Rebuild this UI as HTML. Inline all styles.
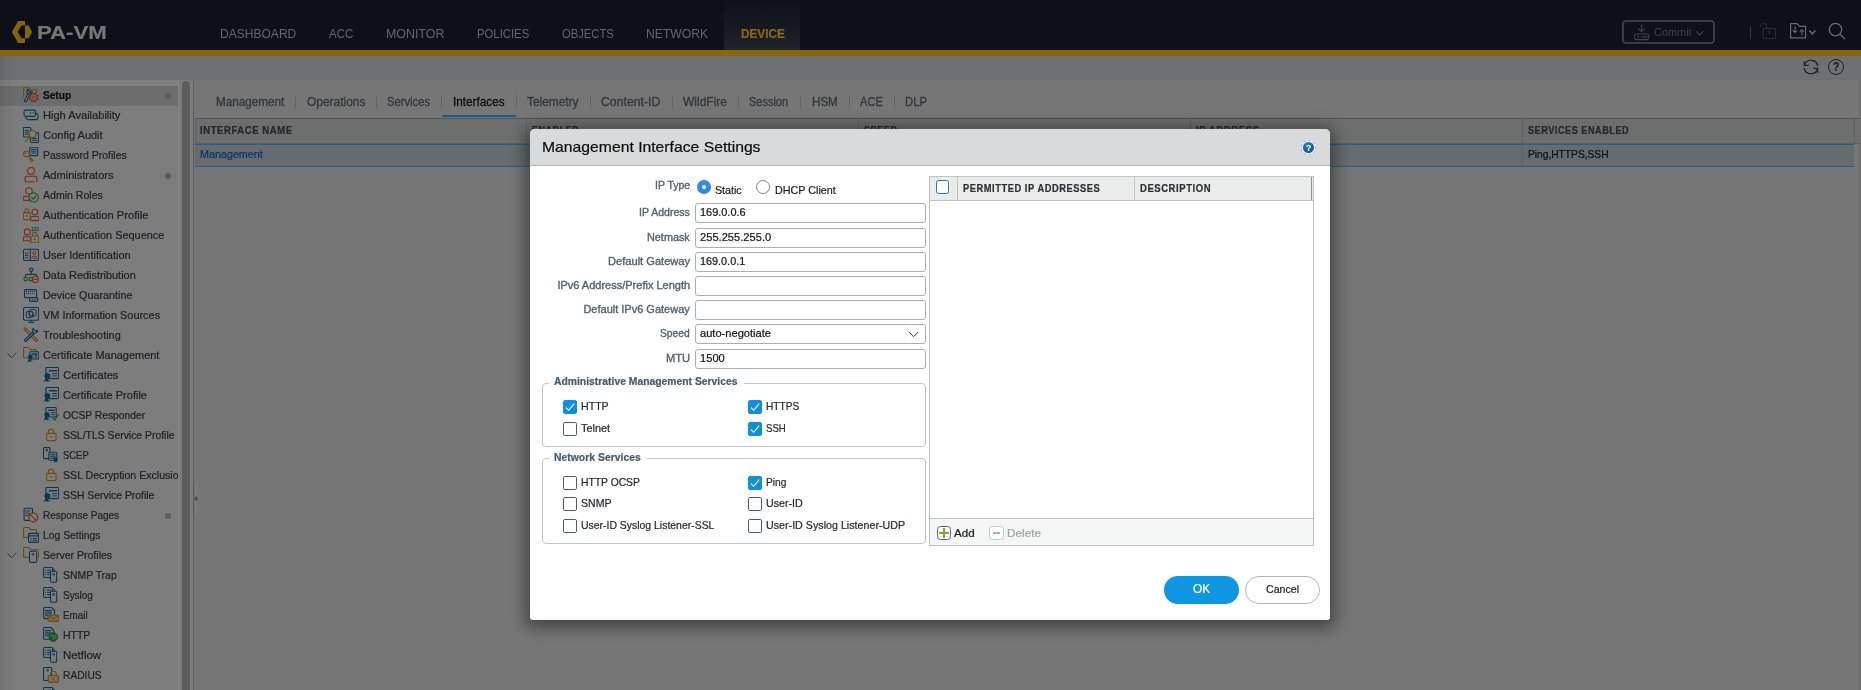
<!DOCTYPE html>
<html lang="en">
<head>
<meta charset="utf-8">
<title>PA-VM</title>
<style>
*{box-sizing:border-box;margin:0;padding:0}
html,body{width:1861px;height:690px;overflow:hidden;background:#7a7a7a;font-family:"Liberation Sans",sans-serif;font-size:12px;color:#1e2024}
.abs{position:absolute}
#top{left:0;top:0;width:1861px;height:50px;background:#0d1016}
#gold{left:0;top:50px;width:1861px;height:6px;background:#88670a}
#strip{left:0;top:56px;width:1861px;height:24px;background:#6f7072}
.logo-t{left:37px;top:20px;font-weight:bold;font-size:19.5px;line-height:24px;color:#9b9b9b;letter-spacing:1.1px;white-space:nowrap}
.nav{top:25px;font-size:13px;line-height:16px;color:#8d9097;white-space:nowrap;letter-spacing:-.1px}
#devtab{left:724px;top:0;width:76px;height:50px;background:linear-gradient(#0e1117 0%,#14171e 45%,#1f232a 100%)}
.nav.act{color:#b8890e;font-weight:bold}
/* sidebar */
#sbtop{left:0;top:80px;width:178px;height:6px;background:#808080}
#side{left:0;top:86px;width:178px;height:604px;background:#7d7d7d;overflow:hidden}
.it{position:absolute;left:0;width:178px;height:20px;line-height:20px;white-space:nowrap;color:#1d1f23}
.it.sel{background:#6c6d6f;font-weight:bold;color:#0c0d0f}
.dot{position:absolute;left:165px;top:7px;width:6px;height:6px;border-radius:3px;background:#5e5e5e}
#sgap{left:178px;top:80px;width:16px;height:610px;background:#7c7c7c;border-left:1px solid #858585}
#sthumb{left:182px;top:81px;width:8px;height:640px;border-radius:4px;background:#5c5c5c}
#vline{left:193.2px;top:80px;width:1.9px;height:610px;background:#5b5c5f}
/* main */
#main{left:194px;top:80px;width:1665px;height:610px;background:#767676}
#rgt{left:1859px;top:80px;width:2px;height:610px;background:#6d6d6d}
.tab{top:94px;font-size:12px;line-height:16px;color:#3b3d41;white-space:nowrap}
.tsep{top:95px;width:1px;height:13px;background:#636466}
#thead{left:195px;top:118px;width:1664px;height:26px;background:#6d6f6f;border-top:1.5px solid #515354;border-bottom:1px solid #5f6162;border-left:1px solid #5c5e5f}
.th{top:125px;font-size:9.5px;font-weight:bold;line-height:12px;letter-spacing:.75px;color:#27292c;white-space:nowrap}
.cs{top:119px;width:1px;height:47px;background:#5f6162}
#trow{left:195px;top:144px;width:1660px;height:23px;background:#656b6e;border-top:1px solid #2b6085;border-bottom:1px solid #2b6085}
/* dialog */
#dlg{left:530px;top:129px;width:800px;height:491px;background:#fff;border-radius:5px 5px 3px 3px;box-shadow:0 3px 16px 5px rgba(0,0,0,.42)}
#dhead{left:0;top:0;width:800px;height:37px;background:#d9dadb;border-bottom:1px solid #b3b6b9;border-radius:5px 5px 0 0}
#dtitle{left:12px;top:7px;font-size:16px;line-height:22px;color:#111;white-space:nowrap;letter-spacing:-.15px}
.lbl{position:absolute;right:640px;font-size:12px;line-height:16px;color:#4e5b66;white-space:nowrap;text-align:right}
.inp{position:absolute;left:165px;width:231px;height:19px;border:1px solid #a9abad;border-radius:2px;background:#fff;font-size:11.5px;line-height:15px;padding:0 0 0 4px;color:#111;white-space:nowrap}
.fs{position:absolute;left:12.2px;width:383.8px;border:1px solid #c3c6c9;border-radius:4px}
.lg{position:absolute;left:7px;top:-9px;background:#fff;padding:0 5px;font-weight:bold;font-size:11.5px;line-height:16px;color:#4a5965;white-space:nowrap;letter-spacing:-.2px}
.cb{position:absolute;width:14px;height:14px;border:1px solid #4f5b66;border-radius:1.8px;background:#fff}
.cb.on{background:#1090dc;border-color:#1090dc;border-radius:2px}
.cb.on svg{position:absolute;left:0;top:0}
.cl{position:absolute;font-size:12px;line-height:16px;color:#222;white-space:nowrap}
.t{position:absolute;white-space:nowrap;line-height:1;transform-origin:0 0;display:block;-webkit-text-stroke:.22px currentColor}
#wrap{position:absolute;left:0;top:0;width:1861px;height:690px;will-change:transform}
#ledge{left:0;top:56px;width:20px;height:634px;background:linear-gradient(to right,rgba(0,0,0,.09),rgba(0,0,0,.045) 30%,rgba(0,0,0,.015) 65%,rgba(0,0,0,0))}
</style>
</head>
<body>
<div id="wrap">
<div id="top" class="abs"></div>
<div id="devtab" class="abs"></div>
<div id="gold" class="abs"></div>
<div id="strip" class="abs"></div>
<svg class="abs" style="left:0px;top:0px;overflow:visible" width="40" height="50" viewBox="0 0 40 50" fill="none" ><path d="M25.03 20.97 H18.1 L11.9 31.97 L18.1 42.96 H25.03 V38.2 H21.5 L17.7 31.97 L21.5 25.6 H25.03 Z" fill="#83650b"/><path d="M25.03 25.6 H28.75 L32.1 31.97 L28.75 38.2 H25.03 Z" fill="#83650b"/></svg>
<span class="t" style="left:220.00px;top:27.10px;font-size:13px;color:#62666e;transform:scaleX(0.9264);-webkit-text-stroke:0;">DASHBOARD</span>
<span class="t" style="left:329.00px;top:27.10px;font-size:13px;color:#62666e;transform:scaleX(0.8851);-webkit-text-stroke:0;">ACC</span>
<span class="t" style="left:385.80px;top:27.10px;font-size:13px;color:#62666e;transform:scaleX(0.9566);-webkit-text-stroke:0;">MONITOR</span>
<span class="t" style="left:476.80px;top:27.10px;font-size:13px;color:#62666e;transform:scaleX(0.8705);-webkit-text-stroke:0;">POLICIES</span>
<span class="t" style="left:561.60px;top:27.10px;font-size:13px;color:#62666e;transform:scaleX(0.8638);-webkit-text-stroke:0;">OBJECTS</span>
<span class="t" style="left:646.30px;top:27.10px;font-size:13px;color:#62666e;transform:scaleX(0.9360);-webkit-text-stroke:0;">NETWORK</span>
<span class="t" style="left:740.50px;top:27.10px;font-size:13px;color:#8c690c;font-weight:bold;transform:scaleX(0.9048);">DEVICE</span>
<span class="t" style="left:36.50px;top:22.82px;font-size:19px;color:#767676;font-weight:bold;transform:scaleX(1.1653);">PA-VM</span>
<div class="abs" style="left:1622px;top:20px;width:93px;height:24px;border:2px solid #373b43;border-radius:4px"></div>
<svg class="abs" style="left:1634px;top:24px;overflow:visible" width="15" height="16" viewBox="0 0 15 16" fill="none" ><path d="M7.6 .2 V7.6 M4.5 4.6 L7.6 7.8 L10.7 4.6" stroke="#3e424a" stroke-width="1.1"/><rect x=".6" y="10" width="14" height="5.6" rx="1.3" stroke="#3e424a" stroke-width="1.1"/><circle cx="4.3" cy="12.8" r=".8" stroke="#3e424a" stroke-width=".8"/><path d="M7.2 12.8 H13.6" stroke="#3e424a" stroke-width="1.1"/></svg>
<span class="t" style="left:1653.70px;top:27.49px;font-size:11px;color:#3e424a;transform:scaleX(0.9923);-webkit-text-stroke:0;">Commit</span>
<svg class="abs" style="left:1696px;top:30.5px;overflow:visible" width="8" height="5" viewBox="0 0 8 5" fill="none" ><path d="M.3 .4 L3.7 4.3 L7.1 .4" stroke="#3e424a" stroke-width="1.1"/></svg>
<div class="abs" style="left:1749.6px;top:26px;width:1.2px;height:12.5px;background:#343840"></div>
<svg class="abs" style="left:1759px;top:22px;overflow:visible" width="18" height="18" viewBox="0 0 18 18" fill="none" ><rect x="4.2" y="6.7" width="12.4" height="9.8" rx=".8" stroke="#252930" stroke-width="1.2"/><path d="M7.8 6.7 V4.6 a3.1 3.1 0 0 0 -6.2 0 V5.4" stroke="#252930" stroke-width="1.2"/><circle cx="10.4" cy="10" r="1.15" fill="#252930"/><path d="M10.4 10.4 V13" stroke="#252930" stroke-width=".9"/></svg>
<svg class="abs" style="left:1789.6px;top:22.5px;overflow:visible" width="16.2" height="15.8" viewBox="0 0 16.2 15.8" fill="none" ><path d="M.6 .6 H7 L9.7 3.4 H15.6 V14.9 H.6 Z" stroke="#686b72" stroke-width="1.2" stroke-linejoin="round"/><path d="M5 3.5 V9.4 M2.9 7.4 L5 9.6 L7.1 7.4" stroke="#686b72" stroke-width="1.05"/><path d="M11.9 12.4 V6.9 M9.8 9 L11.9 6.7 L14 9" stroke="#686b72" stroke-width="1.05"/></svg>
<svg class="abs" style="left:1808.5px;top:29.7px;overflow:visible" width="7" height="5" viewBox="0 0 7 5" fill="none" ><path d="M.4 .6 L3.4 3.8 L6.4 .6" stroke="#686b72" stroke-width="1.5"/></svg>
<svg class="abs" style="left:1828px;top:21.9px;overflow:visible" width="18" height="18" viewBox="0 0 18 18" fill="none" ><circle cx="7.5" cy="7.6" r="6.2" stroke="#686b72" stroke-width="1.3"/><path d="M12 12.2 L16.8 16.8" stroke="#686b72" stroke-width="1.25" stroke-linecap="round"/></svg>
<svg class="abs" style="left:1803px;top:59px;overflow:visible" width="16" height="16" viewBox="0 0 16 16" fill="none" ><path d="M1.3 6.4 A6.9 6.9 0 0 1 14.8 7.2 M1.3 2.2 V6.4 H5.7 M14.6 9.35 A6.9 6.9 0 0 1 1.1 9.2 M10.4 9.35 H14.6 V13.7" stroke="#1c1e21" stroke-width="1.2"/></svg>
<div class="abs" style="left:1828.3px;top:59.3px;width:15.4px;height:15.4px;border:1.2px solid #1c1e21;border-radius:8px"></div>
<span class="t" style="left:1832.80px;top:61.02px;font-size:12.5px;color:#1c1e21;font-weight:bold;transform:scaleX(0.8376);">?</span>

<div id="sbtop" class="abs"></div>
<div id="side" class="abs">
<div class="it sel" style="top:0px"><svg style="position:absolute;left:23px;top:1px" width="16" height="16" viewBox="0 0 16 16" fill="none"><path d="M.6 10 V1 a.7 .7 0 0 1 .7 -.7 H5.3 l1.5 2.3 H13 a.7 .7 0 0 1 .7 .7 V5.3" stroke="#6b4c0d" stroke-width="1.08" fill="none" stroke-linecap="round" stroke-linejoin="round" /><path d="M6.4 5.8 L2.5 13.9" stroke="#0b3651" stroke-width="3.1" fill="none" stroke-linecap="round" stroke-linejoin="round" /><path d="M6.4 5.8 L2.5 13.9" stroke="#6c6d6f" stroke-width="1.1" fill="none" stroke-linecap="round" stroke-linejoin="round" /><path d="M5 2.3 a2.6 2.6 0 1 0 4.1 2.1 l-1.9 .8 -1.2 -1.4 z" stroke="#0b3651" stroke-width="1.1" fill="#6c6d6f" stroke-linecap="round" stroke-linejoin="round" /><circle cx="10.7" cy="10.5" r="3.5" stroke="#7f2b17" stroke-width="1.15" fill="none"/><path d="M14.12 11.92 L15.41 12.45 M12.12 13.92 L12.65 15.21 M9.28 13.92 L8.75 15.21 M7.28 11.92 L5.99 12.45 M7.28 9.08 L5.99 8.55 M9.28 7.08 L8.75 5.79 M12.12 7.08 L12.65 5.79 M14.12 9.08 L15.41 8.55 " stroke="#7f2b17" stroke-width="1.7"/><circle cx="10.7" cy="10.5" r="1.45" stroke="#7f2b17" stroke-width=".95" fill="none"/></svg><i class="dot"></i></div><span class="t" style="left:43.30px;top:4.29px;font-size:11px;color:#0c0d0f;font-weight:bold;transform:scaleX(0.9194);">Setup</span>
<div class="it" style="top:20px"><svg style="position:absolute;left:23px;top:1px" width="16" height="16" viewBox="0 0 16 16" fill="none"><rect x="3.1" y="6.6" width="11.9" height="6" rx="1.6" stroke="#0b3651" stroke-width="1.08" fill="none"/><rect x="1" y="3.1" width="11.6" height="6.3" rx="1.6" stroke="#0b3651" stroke-width="1.08" fill="#7d7d7d"/><rect x="6.8" y="5.2" width="1.5" height="1.5" fill="#145823"/><rect x="9.8" y="5.2" width="1.5" height="1.5" fill="#145823"/></svg></div><span class="t" style="left:43.30px;top:24.29px;font-size:11px;color:#1d1f23;transform:scaleX(1.0072);">High Availability</span>
<div class="it" style="top:40px"><svg style="position:absolute;left:23px;top:1px" width="16" height="16" viewBox="0 0 16 16" fill="none"><rect x="0.4" y="0.4" width="7.4" height="9.6" rx="1.1" stroke="#0b3651" stroke-width="1.08" fill="none"/><path d="M2.2 3.4 H5.4" stroke="#0b3651" stroke-width="1" fill="none" stroke-linecap="round" stroke-linejoin="round" /><path d="M2.2 5.3 H5.4" stroke="#0b3651" stroke-width="1" fill="none" stroke-linecap="round" stroke-linejoin="round" /><path d="M2.2 7.2 H5.4" stroke="#0b3651" stroke-width="1" fill="none" stroke-linecap="round" stroke-linejoin="round" /><rect x="7.4" y="5.6" width="8.2" height="9.9" rx="1.1" stroke="#0b3651" stroke-width="1.08" fill="none"/><path d="M9.2 11.6 H13.8" stroke="#0b3651" stroke-width="1" fill="none" stroke-linecap="round" stroke-linejoin="round" /><path d="M9.2 13.4 H13.8" stroke="#0b3651" stroke-width="1" fill="none" stroke-linecap="round" stroke-linejoin="round" /><circle cx="9.5" cy="7.1" r="3.6" stroke="#6b4c0d" stroke-width="1.2" fill="#7d7d7d"/><path d="M7 9.9 L2.3 14.6" stroke="#6b4c0d" stroke-width="1.2" fill="none" stroke-linecap="round" stroke-linejoin="round" /></svg></div><span class="t" style="left:43.30px;top:44.29px;font-size:11px;color:#1d1f23;">Config Audit</span>
<div class="it" style="top:60px"><svg style="position:absolute;left:23px;top:1px" width="16" height="16" viewBox="0 0 16 16" fill="none"><rect x="6.7" y="0.3" width="8" height="8.3" rx="1.1" stroke="#0b3651" stroke-width="1.08" fill="none"/><path d="M8.5 2.4 H12.9" stroke="#0b3651" stroke-width="1" fill="none" stroke-linecap="round" stroke-linejoin="round" /><path d="M8.5 4.2 H12.9" stroke="#0b3651" stroke-width="1" fill="none" stroke-linecap="round" stroke-linejoin="round" /><path d="M8.5 6.1 H12.9" stroke="#0b3651" stroke-width="1" fill="none" stroke-linecap="round" stroke-linejoin="round" /><circle cx="3.4" cy="6.9" r="2.9" stroke="#6b4c0d" stroke-width="1.2" fill="#7d7d7d"/><circle cx="2.7" cy="6.2" r="0.6" stroke="#6b4c0d" stroke-width=".8" fill="none"/><path d="M5.5 9 L10 13.4 L8.9 14.6 L7.6 13.3 M7.8 11.3 l-1.2 1.2" stroke="#6b4c0d" stroke-width="1.2" fill="none" stroke-linecap="round" stroke-linejoin="round" /></svg></div><span class="t" style="left:43.30px;top:64.29px;font-size:11px;color:#1d1f23;transform:scaleX(0.9506);">Password Profiles</span>
<div class="it" style="top:80px"><svg style="position:absolute;left:23px;top:1px" width="16" height="16" viewBox="0 0 16 16" fill="none"><circle cx="8" cy="3.9" r="3.5" stroke="#7f2b17" stroke-width="1.08" fill="none"/><path d="M13.8 14.7 V10.5 a1.3 1.3 0 0 0 -1.3 -1.3 H3.5 a1.3 1.3 0 0 0 -1.3 1.3 V14.7 H11.2" stroke="#7f2b17" stroke-width="1.08" fill="none" stroke-linecap="round" stroke-linejoin="round" /></svg><i class="dot"></i></div><span class="t" style="left:43.30px;top:84.29px;font-size:11px;color:#1d1f23;transform:scaleX(1.0029);">Administrators</span>
<div class="it" style="top:100px"><svg style="position:absolute;left:23px;top:1px" width="16" height="16" viewBox="0 0 16 16" fill="none"><circle cx="6" cy="3.9" r="3.2" stroke="#7f2b17" stroke-width="1.08" fill="none"/><path d="M8.5 13.4 V10.7 a1.3 1.3 0 0 0 -1.3 -1.3 H1.7 a1.3 1.3 0 0 0 -1.3 1.3 V13.4 H8.5" stroke="#7f2b17" stroke-width="1.08" fill="none" stroke-linecap="round" stroke-linejoin="round" /><circle cx="10.7" cy="10.4" r="4.6" stroke="#145823" stroke-width="1.2" fill="#7d7d7d"/><path d="M8.6 10.5 L10.2 12.2 L13 8.8" stroke="#145823" stroke-width="1.2" fill="none" stroke-linecap="round" stroke-linejoin="round" /></svg></div><span class="t" style="left:43.30px;top:104.29px;font-size:11px;color:#1d1f23;transform:scaleX(0.9590);">Admin Roles</span>
<div class="it" style="top:120px"><svg style="position:absolute;left:23px;top:1px" width="16" height="16" viewBox="0 0 16 16" fill="none"><path d="M2 5.6 V3.55 a1.85 1.85 0 0 1 3.7 0 V5.6" stroke="#6b4c0d" stroke-width="1.08" fill="none" stroke-linecap="round" stroke-linejoin="round" /><rect x="0.4" y="5.6" width="6.8" height="7" rx="1.1" stroke="#6b4c0d" stroke-width="1.08" fill="none"/><rect x="3.05" y="8.1" width="1.5" height="1.7" fill="#6b4c0d"/><circle cx="11.8" cy="5.1" r="2.9" stroke="#7f2b17" stroke-width="1.08" fill="none"/><path d="M15.8 13.6 V10.8 a1.3 1.3 0 0 0 -1.3 -1.3 H9.1 a1.3 1.3 0 0 0 -1.3 1.3 V13.6 H15.8" stroke="#7f2b17" stroke-width="1.08" fill="none" stroke-linecap="round" stroke-linejoin="round" /></svg></div><span class="t" style="left:43.30px;top:124.29px;font-size:11px;color:#1d1f23;transform:scaleX(1.0149);">Authentication Profile</span>
<div class="it" style="top:140px"><svg style="position:absolute;left:23px;top:1px" width="16" height="16" viewBox="0 0 16 16" fill="none"><circle cx="4.3" cy="4.9" r="3" stroke="#7f2b17" stroke-width="1.08" fill="none"/><path d="M7.4 13.8 V11 a1.3 1.3 0 0 0 -1.3 -1.3 H1.7 a1.3 1.3 0 0 0 -1.3 1.3 V13.8 H7.4" stroke="#7f2b17" stroke-width="1.08" fill="none" stroke-linecap="round" stroke-linejoin="round" /><text x="8" y="3.6" font-family="Liberation Sans,sans-serif" font-size="4.6" font-weight="bold" fill="#0b3651" textLength="7.8" lengthAdjust="spacingAndGlyphs">123</text><path d="M9.6 9 V7.55 a2.15 2.15 0 0 1 4.3 0 V9" stroke="#6b4c0d" stroke-width="1.08" fill="none" stroke-linecap="round" stroke-linejoin="round" /><rect x="7.9" y="9" width="7.8" height="6.8" rx="1.1" stroke="#6b4c0d" stroke-width="1.08" fill="#7d7d7d"/><rect x="11.05" y="11.4" width="1.5" height="1.7" fill="#6b4c0d"/></svg></div><span class="t" style="left:43.30px;top:144.29px;font-size:11px;color:#1d1f23;transform:scaleX(0.9916);">Authentication Sequence</span>
<div class="it" style="top:160px"><svg style="position:absolute;left:23px;top:1px" width="16" height="16" viewBox="0 0 16 16" fill="none"><rect x="0.5" y="2.2" width="15.1" height="11.3" rx="1.5" stroke="#0b3651" stroke-width="1.08" fill="none"/><path d="M7.3 2.2 V13.5" stroke="#0b3651" stroke-width="1.08" fill="none" stroke-linecap="round" stroke-linejoin="round" /><path d="M2.3 6.1 H5 M2.3 8.4 H5 M2.3 10.7 H5" stroke="#0b3651" stroke-width="1" fill="none" stroke-linecap="round" stroke-linejoin="round" /><circle cx="11.3" cy="5.9" r="1.5" stroke="#7f2b17" stroke-width="1" fill="none"/><path d="M9 11.4 V10.6 a1.4 1.4 0 0 1 1.4 -1.4 H12.3 a1.4 1.4 0 0 1 1.4 1.4 V11.4 H10.5" stroke="#7f2b17" stroke-width="1" fill="none" stroke-linecap="round" stroke-linejoin="round" /></svg></div><span class="t" style="left:43.30px;top:164.29px;font-size:11px;color:#1d1f23;transform:scaleX(0.9949);">User Identification</span>
<div class="it" style="top:180px"><svg style="position:absolute;left:23px;top:1px" width="16" height="16" viewBox="0 0 16 16" fill="none"><rect x="6.8" y="1.2" width="3" height="3" rx="0.6" stroke="#0b3651" stroke-width="1.1" fill="none"/><path d="M8.3 4.3 V7.4 M2.6 9.6 V8.6 a1.2 1.2 0 0 1 1.2 -1.2 H12.6 a1.2 1.2 0 0 1 1.2 1.2 V9" stroke="#0b3651" stroke-width="1.1" fill="none" stroke-linecap="round" stroke-linejoin="round" /><rect x="1.1" y="10.5" width="3.1" height="3.1" rx="0.5" stroke="#145823" stroke-width="1.1" fill="none"/><rect x="6.2" y="10.5" width="3.1" height="3.1" rx="0.5" stroke="#145823" stroke-width="1.1" fill="none"/><circle cx="12.5" cy="12.4" r="3.1" stroke="#7f2b17" stroke-width="1.1" fill="#7d7d7d"/><path d="M11 12.4 H14" stroke="#7f2b17" stroke-width="1.2" fill="none" stroke-linecap="round" stroke-linejoin="round" /></svg></div><span class="t" style="left:43.30px;top:184.29px;font-size:11px;color:#1d1f23;transform:scaleX(0.9908);">Data Redistribution</span>
<div class="it" style="top:200px"><svg style="position:absolute;left:23px;top:1px" width="16" height="16" viewBox="0 0 16 16" fill="none"><rect x="1.5" y="2.6" width="12.1" height="8" rx="1" stroke="#0b3651" stroke-width="1.08" fill="none"/><path d="M3.4 4.6 H12" stroke="#0b3651" stroke-width="1.1" fill="none" stroke-linecap="round" stroke-linejoin="round" stroke-dasharray=".2 1.7"/><path d="M3.4 6.8 H12" stroke="#0b3651" stroke-width="1.1" fill="none" stroke-linecap="round" stroke-linejoin="round" stroke-dasharray=".2 1.7"/><rect x="6.5" y="10.6" width="8.3" height="3.8" rx="1.1" stroke="#0b3651" stroke-width="1.08" fill="#7d7d7d"/><path d="M9.3 12.5 h.1 M12 12.5 h.1" stroke="#0b3651" stroke-width="1.3" fill="none" stroke-linecap="round" stroke-linejoin="round" /></svg></div><span class="t" style="left:43.30px;top:204.29px;font-size:11px;color:#1d1f23;transform:scaleX(0.9823);">Device Quarantine</span>
<div class="it" style="top:220px"><svg style="position:absolute;left:23px;top:1px" width="16" height="16" viewBox="0 0 16 16" fill="none"><rect x="0.5" y="0.5" width="15.1" height="12.7" rx="1.6" stroke="#0b3651" stroke-width="1.08" fill="none"/><path d="M8 13.2 V15.3 M5.6 15.4 H10.6" stroke="#0b3651" stroke-width="1.08" fill="none" stroke-linecap="round" stroke-linejoin="round" /><rect x="3.3" y="4.4" width="6.6" height="6.2" rx="1.6" stroke="#0b3651" stroke-width="1" fill="none"/><rect x="6" y="2.6" width="7.2" height="6.4" rx="1.6" stroke="#0b3651" stroke-width="1" fill="none"/><circle cx="8.3" cy="6.9" r="2.2" stroke="#0b3651" stroke-width=".9" fill="none"/></svg></div><span class="t" style="left:43.30px;top:224.29px;font-size:11px;color:#1d1f23;transform:scaleX(0.9924);">VM Information Sources</span>
<div class="it" style="top:240px"><svg style="position:absolute;left:23px;top:1px" width="16" height="16" viewBox="0 0 16 16" fill="none"><path d="M2 1.8 L13.4 13.4" stroke="#6b4c0d" stroke-width="3.1" fill="none" stroke-linecap="round" stroke-linejoin="round" /><path d="M2.3 2.1 L13.1 13.1" stroke="#7d7d7d" stroke-width="1" fill="none" stroke-linecap="round" stroke-linejoin="round" /><path d="M11.6 4.6 L2.6 13.3" stroke="#0b3651" stroke-width="3.1" fill="none" stroke-linecap="round" stroke-linejoin="round" /><path d="M11.6 4.6 L2.6 13.3" stroke="#7d7d7d" stroke-width="1" fill="none" stroke-linecap="round" stroke-linejoin="round" /><path d="M10.2 1.4 a2.7 2.7 0 1 0 4.4 1.8 l-2 1 -1.5 -1.4 z" stroke="#0b3651" stroke-width="1.1" fill="#7d7d7d" stroke-linecap="round" stroke-linejoin="round" /></svg></div><span class="t" style="left:43.30px;top:244.29px;font-size:11px;color:#1d1f23;transform:scaleX(0.9900);">Troubleshooting</span>
<div class="it" style="top:260px"><svg style="position:absolute;left:7px;top:6px" width="10" height="8" viewBox="0 0 10 8" fill="none"><path d="M.2 .9 L4.6 5.8 L9 .9" stroke="#37393c" stroke-width="1"/></svg><svg style="position:absolute;left:23px;top:1px" width="16" height="16" viewBox="0 0 16 16" fill="none"><path d="M0.6 10.8 V1.2 a.8 .8 0 0 1 .8 -.8 H5.8 l1.6 2.2 H12.6 a.8 .8 0 0 1 .8 .8 V10.8 Z" stroke="#6b4c0d" stroke-width="1.08" fill="none" stroke-linecap="round" stroke-linejoin="round" /><rect x="6.8" y="4.8" width="9" height="7.2" fill="#7d7d7d"/><rect x="6.8" y="4.8" width="9" height="7.2" rx="1.2" stroke="#0b3651" stroke-width="1.08" fill="none"/><path d="M9.32 6.96 H13.8" stroke="#0b3651" stroke-width="1.5" fill="none" stroke-linecap="round" stroke-linejoin="round" /><path d="M11.75 8.76 H13.8 M11.75 10.272 H13.8" stroke="#0b3651" stroke-width="1" fill="none" stroke-linecap="round" stroke-linejoin="round" /><path d="M6.08 11.1 L4.43 15.4 L6.19 14.3 L7.4 15.1 L8.61 14.3 L10.37 15.4 Z" fill="#0b3651"/><circle cx="7.4" cy="10" r="2.2" fill="#0b3651" stroke="#0b3651" stroke-width=".8" stroke-dasharray="1 .7"/></svg></div><span class="t" style="left:43.30px;top:264.29px;font-size:11px;color:#1d1f23;transform:scaleX(0.9967);">Certificate Management</span>
<div class="it" style="top:280px"><svg style="position:absolute;left:43px;top:1px" width="16" height="16" viewBox="0 0 16 16" fill="none"><rect x="2.9" y="0.4" width="12.7" height="11.2" rx="1.2" stroke="#0b3651" stroke-width="1.08" fill="none"/><path d="M6.456 3.76 H13.6" stroke="#0b3651" stroke-width="1.5" fill="none" stroke-linecap="round" stroke-linejoin="round" /><path d="M9.885 6.56 H13.6 M9.885 8.912 H13.6" stroke="#0b3651" stroke-width="1" fill="none" stroke-linecap="round" stroke-linejoin="round" /><path d="M2.78 10.25 L0.755 15.2 L2.915 14.1 L4.4 14.9 L5.885 14.1 L8.045 15.2 Z" fill="#0b3651"/><circle cx="4.4" cy="8.9" r="2.7" fill="#0b3651" stroke="#0b3651" stroke-width=".8" stroke-dasharray="1 .7"/></svg></div><span class="t" style="left:63.30px;top:284.29px;font-size:11px;color:#1d1f23;">Certificates</span>
<div class="it" style="top:300px"><svg style="position:absolute;left:43px;top:1px" width="16" height="16" viewBox="0 0 16 16" fill="none"><rect x="2.9" y="0.4" width="12.7" height="11.2" rx="1.2" stroke="#0b3651" stroke-width="1.08" fill="none"/><path d="M6.456 3.76 H13.6" stroke="#0b3651" stroke-width="1.5" fill="none" stroke-linecap="round" stroke-linejoin="round" /><path d="M9.885 6.56 H13.6 M9.885 8.912 H13.6" stroke="#0b3651" stroke-width="1" fill="none" stroke-linecap="round" stroke-linejoin="round" /><path d="M2.78 10.25 L0.755 15.2 L2.915 14.1 L4.4 14.9 L5.885 14.1 L8.045 15.2 Z" fill="#0b3651"/><circle cx="4.4" cy="8.9" r="2.7" fill="#0b3651" stroke="#0b3651" stroke-width=".8" stroke-dasharray="1 .7"/></svg></div><span class="t" style="left:63.30px;top:304.29px;font-size:11px;color:#1d1f23;transform:scaleX(1.0028);">Certificate Profile</span>
<div class="it" style="top:320px"><svg style="position:absolute;left:43px;top:1px" width="16" height="16" viewBox="0 0 16 16" fill="none"><rect x="2.9" y="0.4" width="10.3" height="9.6" rx="1.2" stroke="#0b3651" stroke-width="1.08" fill="none"/><path d="M5.784 3.28 H11.2" stroke="#0b3651" stroke-width="1.5" fill="none" stroke-linecap="round" stroke-linejoin="round" /><path d="M8.565 5.68 H11.2 M8.565 7.696 H11.2" stroke="#0b3651" stroke-width="1" fill="none" stroke-linecap="round" stroke-linejoin="round" /><path d="M2.6 9.05 L0.725 13.6 L2.725 12.5 L4.1 13.3 L5.475 12.5 L7.475 13.6 Z" fill="#0b3651"/><circle cx="4.1" cy="7.8" r="2.5" fill="#0b3651" stroke="#0b3651" stroke-width=".8" stroke-dasharray="1 .7"/><path d="M9.8 10.8 L11.8 13 L15.4 7.6" stroke="#145823" stroke-width="1.2" fill="none" stroke-linecap="round" stroke-linejoin="round" /></svg></div><span class="t" style="left:63.30px;top:324.29px;font-size:11px;color:#1d1f23;transform:scaleX(0.9344);">OCSP Responder</span>
<div class="it" style="top:340px"><svg style="position:absolute;left:43px;top:1px" width="16" height="16" viewBox="0 0 16 16" fill="none"><path d="M5.4 6.4 V5.05 a2.75 2.75 0 0 1 5.5 0 V6.4" stroke="#6b4c0d" stroke-width="1.08" fill="none" stroke-linecap="round" stroke-linejoin="round" /><rect x="3.6" y="6.4" width="9.4" height="7.2" rx="1.1" stroke="#6b4c0d" stroke-width="1.08" fill="none"/><rect x="7.55" y="9" width="1.5" height="1.7" fill="#6b4c0d"/></svg></div><span class="t" style="left:63.30px;top:344.29px;font-size:11px;color:#1d1f23;transform:scaleX(0.9449);">SSL/TLS Service Profile</span>
<div class="it" style="top:360px"><svg style="position:absolute;left:43px;top:1px" width="16" height="16" viewBox="0 0 16 16" fill="none"><rect x="0.5" y="0.4" width="6.4" height="11.2" rx="1.2" stroke="#0b3651" stroke-width="1.08" fill="none"/><circle cx="3.7" cy="3" r="0.9" stroke="#0b3651" stroke-width="1" fill="none"/><rect x="5.8" y="5.2" width="8" height="8" fill="#7d7d7d"/><rect x="5.8" y="5.2" width="8" height="8" rx="1.1" stroke="#0b3651" stroke-width="1.08" fill="none"/><path d="M7.6 7.3 H12" stroke="#0b3651" stroke-width="1" fill="none" stroke-linecap="round" stroke-linejoin="round" /><path d="M7.6 9.2 H12" stroke="#0b3651" stroke-width="1" fill="none" stroke-linecap="round" stroke-linejoin="round" /><path d="M7.6 11.1 H12" stroke="#0b3651" stroke-width="1" fill="none" stroke-linecap="round" stroke-linejoin="round" /><path d="M10.6 15.8 L11.6 12.8 L13.6 12.8 L15 15.8 L12.8 14.6 Z" fill="#0b3651"/><circle cx="12.7" cy="12.3" r="1.9" stroke="#0b3651" stroke-width=".7" fill="#0b3651"/></svg></div><span class="t" style="left:63.30px;top:364.29px;font-size:11px;color:#1d1f23;transform:scaleX(0.8576);">SCEP</span>
<div class="it" style="top:380px"><svg style="position:absolute;left:43px;top:1px" width="16" height="16" viewBox="0 0 16 16" fill="none"><path d="M5.4 6.4 V5.05 a2.75 2.75 0 0 1 5.5 0 V6.4" stroke="#6b4c0d" stroke-width="1.08" fill="none" stroke-linecap="round" stroke-linejoin="round" /><rect x="3.6" y="6.4" width="9.4" height="7.2" rx="1.1" stroke="#6b4c0d" stroke-width="1.08" fill="none"/><rect x="7.55" y="9" width="1.5" height="1.7" fill="#6b4c0d"/></svg></div><span class="t" style="left:63.30px;top:384.29px;font-size:11px;color:#1d1f23;transform:scaleX(0.9631);">SSL Decryption Exclusion</span>
<div class="it" style="top:400px"><svg style="position:absolute;left:43px;top:1px" width="16" height="16" viewBox="0 0 16 16" fill="none"><rect x="2.9" y="0.4" width="12.7" height="11.2" rx="1.2" stroke="#0b3651" stroke-width="1.08" fill="none"/><path d="M6.456 3.76 H13.6" stroke="#0b3651" stroke-width="1.5" fill="none" stroke-linecap="round" stroke-linejoin="round" /><path d="M9.885 6.56 H13.6 M9.885 8.912 H13.6" stroke="#0b3651" stroke-width="1" fill="none" stroke-linecap="round" stroke-linejoin="round" /><path d="M2.78 10.25 L0.755 15.2 L2.915 14.1 L4.4 14.9 L5.885 14.1 L8.045 15.2 Z" fill="#0b3651"/><circle cx="4.4" cy="8.9" r="2.7" fill="#0b3651" stroke="#0b3651" stroke-width=".8" stroke-dasharray="1 .7"/></svg></div><span class="t" style="left:63.30px;top:404.29px;font-size:11px;color:#1d1f23;transform:scaleX(0.9462);">SSH Service Profile</span>
<div class="it" style="top:420px"><svg style="position:absolute;left:23px;top:1px" width="16" height="16" viewBox="0 0 16 16" fill="none"><rect x="1.1" y="1.2" width="8.4" height="12.2" rx="1.1" stroke="#0b3651" stroke-width="1.08" fill="none"/><path d="M2.9 3.9 H6.8" stroke="#0b3651" stroke-width="1" fill="none" stroke-linecap="round" stroke-linejoin="round" /><path d="M2.9 6.2 H6.8" stroke="#0b3651" stroke-width="1" fill="none" stroke-linecap="round" stroke-linejoin="round" /><path d="M2.9 8.5 H6.8" stroke="#0b3651" stroke-width="1" fill="none" stroke-linecap="round" stroke-linejoin="round" /><circle cx="10.2" cy="10.4" r="4.4" stroke="#7f2b17" stroke-width="1.2" fill="#7d7d7d"/><path d="M7.2 7.4 L13.2 13.4" stroke="#7f2b17" stroke-width="1.2" fill="none" stroke-linecap="round" stroke-linejoin="round" /></svg><i class="dot"></i></div><span class="t" style="left:43.30px;top:424.29px;font-size:11px;color:#1d1f23;transform:scaleX(0.9083);">Response Pages</span>
<div class="it" style="top:440px"><svg style="position:absolute;left:23px;top:1px" width="16" height="16" viewBox="0 0 16 16" fill="none"><path d="M0.6 10.4 V1.2 a.8 .8 0 0 1 .8 -.8 H5.8 l1.6 2.2 H12.6 a.8 .8 0 0 1 .8 .8 V10.4 Z" stroke="#6b4c0d" stroke-width="1.08" fill="none" stroke-linecap="round" stroke-linejoin="round" /><rect x="5.5" y="6.4" width="10.2" height="9" rx="1.3" stroke="#0b3651" stroke-width="1.08" fill="#7d7d7d"/><path d="M5.5 8.9 H15.7" stroke="#0b3651" stroke-width="1.08" fill="none" stroke-linecap="round" stroke-linejoin="round" /><path d="M7.6 11.4 h.6 M10 11.4 H13.6 M7.6 13.3 h.6 M10 13.3 H13.6" stroke="#0b3651" stroke-width="1" fill="none" stroke-linecap="round" stroke-linejoin="round" /></svg></div><span class="t" style="left:43.30px;top:444.29px;font-size:11px;color:#1d1f23;transform:scaleX(0.9402);">Log Settings</span>
<div class="it" style="top:460px"><svg style="position:absolute;left:7px;top:6px" width="10" height="8" viewBox="0 0 10 8" fill="none"><path d="M.2 .9 L4.6 5.8 L9 .9" stroke="#37393c" stroke-width="1"/></svg><svg style="position:absolute;left:23px;top:1px" width="16" height="16" viewBox="0 0 16 16" fill="none"><path d="M0.6 10.2 V1.3 a.8 .8 0 0 1 .8 -.8 H5.8 l1.6 2.2 H14.8 a.8 .8 0 0 1 .8 .8 V10.2 Z" stroke="#6b4c0d" stroke-width="1.08" fill="none" stroke-linecap="round" stroke-linejoin="round" /><rect x="6.5" y="4.2" width="7.2" height="11.2" rx="1.2" stroke="#0b3651" stroke-width="1.08" fill="#7d7d7d"/><circle cx="10.1" cy="7.3" r="0.9" stroke="#0b3651" stroke-width="1" fill="none"/></svg></div><span class="t" style="left:43.30px;top:464.29px;font-size:11px;color:#1d1f23;transform:scaleX(0.9579);">Server Profiles</span>
<div class="it" style="top:480px"><svg style="position:absolute;left:43px;top:1px" width="16" height="16" viewBox="0 0 16 16" fill="none"><rect x="0.6" y="0.5" width="9.1" height="10" rx="1.1" stroke="#0b3651" stroke-width="1.08" fill="none"/><path d="M2.4 3.1 h.1 M4.3 3.1 H7.6" stroke="#0b3651" stroke-width="1" fill="none" stroke-linecap="round" stroke-linejoin="round" /><path d="M2.4 5.4 h.1 M4.3 5.4 H7.6" stroke="#0b3651" stroke-width="1" fill="none" stroke-linecap="round" stroke-linejoin="round" /><path d="M2.4 7.7 h.1 M4.3 7.7 H7.6" stroke="#0b3651" stroke-width="1" fill="none" stroke-linecap="round" stroke-linejoin="round" /><path d="M9.5 4.3 V3.3 a1.1 1.1 0 0 1 2.2 0 V4.3" stroke="#0b3651" stroke-width="1" fill="none" stroke-linecap="round" stroke-linejoin="round" /><rect x="7.5" y="4.3" width="6.2" height="10.9" rx="1.2" stroke="#0b3651" stroke-width="1.08" fill="#7d7d7d"/><circle cx="10.6" cy="7.4" r="0.9" stroke="#0b3651" stroke-width="1" fill="none"/></svg></div><span class="t" style="left:63.30px;top:484.29px;font-size:11px;color:#1d1f23;transform:scaleX(0.9478);">SNMP Trap</span>
<div class="it" style="top:500px"><svg style="position:absolute;left:43px;top:1px" width="16" height="16" viewBox="0 0 16 16" fill="none"><rect x="0.6" y="0.5" width="9.1" height="10" rx="1.1" stroke="#0b3651" stroke-width="1.08" fill="none"/><path d="M2.4 3.1 h.1 M4.3 3.1 H7.6" stroke="#0b3651" stroke-width="1" fill="none" stroke-linecap="round" stroke-linejoin="round" /><path d="M2.4 5.4 h.1 M4.3 5.4 H7.6" stroke="#0b3651" stroke-width="1" fill="none" stroke-linecap="round" stroke-linejoin="round" /><path d="M2.4 7.7 h.1 M4.3 7.7 H7.6" stroke="#0b3651" stroke-width="1" fill="none" stroke-linecap="round" stroke-linejoin="round" /><path d="M9.5 4.3 V3.3 a1.1 1.1 0 0 1 2.2 0 V4.3" stroke="#0b3651" stroke-width="1" fill="none" stroke-linecap="round" stroke-linejoin="round" /><rect x="7.5" y="4.3" width="6.2" height="10.9" rx="1.2" stroke="#0b3651" stroke-width="1.08" fill="#7d7d7d"/><circle cx="10.6" cy="7.4" r="0.9" stroke="#0b3651" stroke-width="1" fill="none"/></svg></div><span class="t" style="left:63.30px;top:504.29px;font-size:11px;color:#1d1f23;transform:scaleX(0.9052);">Syslog</span>
<div class="it" style="top:520px"><svg style="position:absolute;left:43px;top:1px" width="16" height="16" viewBox="0 0 16 16" fill="none"><path d="M1.6 0.5 H8.6 L11.6 3.5 V10.6 a1 1 0 0 1 -1 1 H1.6 a1 1 0 0 1 -1 -1 V1.5 a1 1 0 0 1 1 -1 Z" stroke="#0b3651" stroke-width="1.08" fill="none" stroke-linecap="round" stroke-linejoin="round" /><path d="M2.4 3.4 H8.6" stroke="#0b3651" stroke-width="1" fill="none" stroke-linecap="round" stroke-linejoin="round" /><path d="M2.4 5.2 H8.6" stroke="#0b3651" stroke-width="1" fill="none" stroke-linecap="round" stroke-linejoin="round" /><path d="M2.4 7 H8.6" stroke="#0b3651" stroke-width="1" fill="none" stroke-linecap="round" stroke-linejoin="round" /><path d="M2.4 8.8 H8.6" stroke="#0b3651" stroke-width="1" fill="none" stroke-linecap="round" stroke-linejoin="round" /><rect x="5.2" y="8.3" width="10.5" height="6.1" rx="0.9" stroke="#6b4c0d" stroke-width="1.1" fill="#7a6c4e"/><path d="M5.6 8.9 L10.4 12.2 L15.3 8.9" stroke="#6b4c0d" stroke-width="1.1" fill="none" stroke-linecap="round" stroke-linejoin="round" /></svg></div><span class="t" style="left:63.30px;top:524.29px;font-size:11px;color:#1d1f23;transform:scaleX(0.8977);">Email</span>
<div class="it" style="top:540px"><svg style="position:absolute;left:43px;top:1px" width="16" height="16" viewBox="0 0 16 16" fill="none"><path d="M1.6 0.5 H7.8 L10.8 3.5 V11.2 a1 1 0 0 1 -1 1 H1.6 a1 1 0 0 1 -1 -1 V1.5 a1 1 0 0 1 1 -1 Z" stroke="#0b3651" stroke-width="1.08" fill="none" stroke-linecap="round" stroke-linejoin="round" /><path d="M2.4 3.4 H7.8" stroke="#0b3651" stroke-width="1" fill="none" stroke-linecap="round" stroke-linejoin="round" /><path d="M2.4 5.2 H7.8" stroke="#0b3651" stroke-width="1" fill="none" stroke-linecap="round" stroke-linejoin="round" /><path d="M2.4 7 H7.8" stroke="#0b3651" stroke-width="1" fill="none" stroke-linecap="round" stroke-linejoin="round" /><path d="M2.4 8.8 H7.8" stroke="#0b3651" stroke-width="1" fill="none" stroke-linecap="round" stroke-linejoin="round" /><circle cx="10.3" cy="10" r="4.4" stroke="#145823" stroke-width="1" fill="#145823"/><path d="M8 8.6 q1.2 -.9 2.4 0 q.8 1 -.4 1.8 l.5 1.8 M12.4 8 l.8 1.4 -.9 1.6" stroke="#7d7d7d" stroke-width=".8" fill="none" stroke-linecap="round" stroke-linejoin="round" /></svg></div><span class="t" style="left:63.30px;top:544.29px;font-size:11px;color:#1d1f23;transform:scaleX(0.9501);">HTTP</span>
<div class="it" style="top:560px"><svg style="position:absolute;left:43px;top:1px" width="16" height="16" viewBox="0 0 16 16" fill="none"><rect x="0.6" y="0.5" width="9.1" height="10" rx="1.1" stroke="#0b3651" stroke-width="1.08" fill="none"/><path d="M2.4 3.1 h.1 M4.3 3.1 H7.6" stroke="#0b3651" stroke-width="1" fill="none" stroke-linecap="round" stroke-linejoin="round" /><path d="M2.4 5.4 h.1 M4.3 5.4 H7.6" stroke="#0b3651" stroke-width="1" fill="none" stroke-linecap="round" stroke-linejoin="round" /><path d="M2.4 7.7 h.1 M4.3 7.7 H7.6" stroke="#0b3651" stroke-width="1" fill="none" stroke-linecap="round" stroke-linejoin="round" /><path d="M9.5 4.3 V3.3 a1.1 1.1 0 0 1 2.2 0 V4.3" stroke="#0b3651" stroke-width="1" fill="none" stroke-linecap="round" stroke-linejoin="round" /><rect x="7.5" y="4.3" width="6.2" height="10.9" rx="1.2" stroke="#0b3651" stroke-width="1.08" fill="#7d7d7d"/><circle cx="10.6" cy="7.4" r="0.9" stroke="#0b3651" stroke-width="1" fill="none"/></svg></div><span class="t" style="left:63.30px;top:564.29px;font-size:11px;color:#1d1f23;transform:scaleX(1.0358);">Netflow</span>
<div class="it" style="top:580px"><svg style="position:absolute;left:43px;top:1px" width="16" height="16" viewBox="0 0 16 16" fill="none"><rect x="0.5" y="0.4" width="8.2" height="13.1" rx="1.2" stroke="#0b3651" stroke-width="1.08" fill="none"/><circle cx="4.6" cy="3.2" r="0.9" stroke="#0b3651" stroke-width="1" fill="none"/><path d="M7.6 8.5 V7 a2.8 2.8 0 0 1 5.6 0 V8.5" stroke="#6b4c0d" stroke-width="1.08" fill="none" stroke-linecap="round" stroke-linejoin="round" /><rect x="5.2" y="8.5" width="10.4" height="6.9" rx="1.1" stroke="#6b4c0d" stroke-width="1.08" fill="#7a6c4e"/><rect x="9.65" y="10.95" width="1.5" height="1.7" fill="#6b4c0d"/></svg></div><span class="t" style="left:63.30px;top:584.29px;font-size:11px;color:#1d1f23;transform:scaleX(0.9287);">RADIUS</span>
<div class="it" style="top:600px"><svg style="position:absolute;left:43px;top:1px" width="16" height="16" viewBox="0 0 16 16" fill="none"><rect x="0.6" y="0.5" width="9.1" height="10" rx="1.1" stroke="#0b3651" stroke-width="1.08" fill="none"/><path d="M2.4 3.1 h.1 M4.3 3.1 H7.6" stroke="#0b3651" stroke-width="1" fill="none" stroke-linecap="round" stroke-linejoin="round" /><path d="M2.4 5.4 h.1 M4.3 5.4 H7.6" stroke="#0b3651" stroke-width="1" fill="none" stroke-linecap="round" stroke-linejoin="round" /><path d="M2.4 7.7 h.1 M4.3 7.7 H7.6" stroke="#0b3651" stroke-width="1" fill="none" stroke-linecap="round" stroke-linejoin="round" /><path d="M9.5 4.3 V3.3 a1.1 1.1 0 0 1 2.2 0 V4.3" stroke="#0b3651" stroke-width="1" fill="none" stroke-linecap="round" stroke-linejoin="round" /><rect x="7.5" y="4.3" width="6.2" height="10.9" rx="1.2" stroke="#0b3651" stroke-width="1.08" fill="#7d7d7d"/><circle cx="10.6" cy="7.4" r="0.9" stroke="#0b3651" stroke-width="1" fill="none"/></svg></div>
</div>
<div id="ledge" class="abs"></div>
<div id="sgap" class="abs"></div>
<div id="sthumb" class="abs"></div>
<div id="vline" class="abs"></div>
<div id="main" class="abs"></div>
<div id="rgt" class="abs"></div>
<svg class="abs" style="left:194px;top:480px" width="5" height="38" viewBox="0 0 5 38"><path d="M1 1 L3.9 4.5 V33.5 L1 37 Z" fill="#7f7f7f" stroke="#6e6e6e" stroke-width=".6"/><path d="M3.2 15.8 L0 18.5 L3.2 21.2 Z" fill="#45474b"/></svg>
<span class="t" style="left:215.50px;top:96.14px;font-size:12px;color:#34363a;transform:scaleX(0.9751);-webkit-text-stroke:.3px currentColor;">Management</span>
<span class="t" style="left:306.60px;top:96.14px;font-size:12px;color:#34363a;transform:scaleX(0.9965);-webkit-text-stroke:.3px currentColor;">Operations</span>
<span class="t" style="left:387.00px;top:96.14px;font-size:12px;color:#34363a;transform:scaleX(0.9345);-webkit-text-stroke:.3px currentColor;">Services</span>
<span class="t" style="left:452.80px;top:96.14px;font-size:12px;color:#0e0f11;transform:scaleX(0.9791);-webkit-text-stroke:.3px currentColor;">Interfaces</span>
<span class="t" style="left:527.20px;top:96.14px;font-size:12px;color:#34363a;transform:scaleX(0.9901);-webkit-text-stroke:.3px currentColor;">Telemetry</span>
<span class="t" style="left:600.80px;top:96.14px;font-size:12px;color:#34363a;transform:scaleX(1.0236);-webkit-text-stroke:.3px currentColor;">Content-ID</span>
<span class="t" style="left:683.00px;top:96.14px;font-size:12px;color:#34363a;-webkit-text-stroke:.3px currentColor;">WildFire</span>
<span class="t" style="left:749.40px;top:96.14px;font-size:12px;color:#34363a;transform:scaleX(0.9156);-webkit-text-stroke:.3px currentColor;">Session</span>
<span class="t" style="left:811.50px;top:96.14px;font-size:12px;color:#34363a;transform:scaleX(0.9673);-webkit-text-stroke:.3px currentColor;">HSM</span>
<span class="t" style="left:859.90px;top:96.14px;font-size:12px;color:#34363a;transform:scaleX(0.9276);-webkit-text-stroke:.3px currentColor;">ACE</span>
<span class="t" style="left:905.00px;top:96.14px;font-size:12px;color:#34363a;transform:scaleX(0.9382);-webkit-text-stroke:.3px currentColor;">DLP</span>
<div class="abs tsep" style="left:295px"></div>
<div class="abs tsep" style="left:376px"></div>
<div class="abs tsep" style="left:441px"></div>
<div class="abs tsep" style="left:516px"></div>
<div class="abs tsep" style="left:590px"></div>
<div class="abs tsep" style="left:672px"></div>
<div class="abs tsep" style="left:738px"></div>
<div class="abs tsep" style="left:800px"></div>
<div class="abs tsep" style="left:849px"></div>
<div class="abs tsep" style="left:894px"></div>
<div class="abs" style="left:441.5px;top:114.5px;width:74.5px;height:2px;background:#175b86;border-radius:1px"></div>
<div id="thead" class="abs"></div>
<div id="trow" class="abs"></div>
<span class="t" style="left:200.00px;top:125.63px;font-size:10px;color:#24262a;font-weight:bold;letter-spacing:0.6px;transform:scaleX(0.9514);">INTERFACE NAME</span>
<span class="t" style="left:532.00px;top:125.63px;font-size:10px;color:#24262a;font-weight:bold;letter-spacing:0.6px;transform:scaleX(0.8951);">ENABLED</span>
<span class="t" style="left:863.70px;top:125.63px;font-size:10px;color:#24262a;font-weight:bold;letter-spacing:0.6px;transform:scaleX(0.9089);">SPEED</span>
<span class="t" style="left:1196.00px;top:125.63px;font-size:10px;color:#24262a;font-weight:bold;letter-spacing:0.6px;transform:scaleX(0.9549);">IP ADDRESS</span>
<span class="t" style="left:1527.80px;top:125.63px;font-size:10px;color:#24262a;font-weight:bold;letter-spacing:0.6px;transform:scaleX(0.9112);">SERVICES ENABLED</span>
<div class="abs cs" style="left:526px"></div>
<div class="abs cs" style="left:858px"></div>
<div class="abs cs" style="left:1190px"></div>
<div class="abs cs" style="left:1522px"></div>
<div class="abs cs" style="left:1854px"></div>
<div class="abs" style="left:1854px;top:144px;width:1px;height:23px;background:#767676"></div>
<span class="t" style="left:200.40px;top:149.29px;font-size:11px;color:#07356c;transform:scaleX(0.9779);">Management</span>
<span class="t" style="left:1528.00px;top:149.29px;font-size:11px;color:#0e0f11;transform:scaleX(0.9273);">Ping,HTTPS,SSH</span>

<div id="dlg" class="abs">
<div id="dhead" class="abs"></div>
<span class="t" style="left:12.30px;top:10.30px;font-size:15px;color:#0d0d0d;transform:scaleX(1.0481);">Management Interface Settings</span>
<span class="t" style="left:124.80px;top:50.89px;font-size:11px;color:#55626d;transform:scaleX(0.9538);-webkit-text-stroke:.36px currentColor;">IP Type</span>
<div class="abs" style="left:167px;top:51px;width:14px;height:14px;border-radius:7px;background:#2f88ea"></div>
<div class="abs" style="left:171.8px;top:55.8px;width:4.4px;height:4.4px;border-radius:3px;background:#fff"></div>
<span class="t" style="left:185.30px;top:55.69px;font-size:11px;color:#1c1c1c;transform:scaleX(0.9704);">Static</span>
<div class="abs" style="left:226px;top:51px;width:14px;height:14px;border-radius:7px;background:#fff;border:1px solid #858585"></div>
<span class="t" style="left:244.60px;top:55.69px;font-size:11px;color:#1c1c1c;transform:scaleX(0.9782);">DHCP Client</span>
<span class="t" style="left:109.10px;top:77.69px;font-size:11px;color:#55626d;transform:scaleX(0.9604);-webkit-text-stroke:.36px currentColor;">IP Address</span>
<div class="abs" style="left:165px;top:74px;width:231px;height:20px;border:1px solid #abaeb1;border-radius:3px;background:#fff"></div>
<span class="t" style="left:170.40px;top:77.89px;font-size:11px;color:#141414;transform:scaleX(0.9940);">169.0.0.6</span>
<span class="t" style="left:117.20px;top:102.69px;font-size:11px;color:#55626d;transform:scaleX(0.9860);-webkit-text-stroke:.36px currentColor;">Netmask</span>
<div class="abs" style="left:165px;top:99px;width:231px;height:20px;border:1px solid #abaeb1;border-radius:3px;background:#fff"></div>
<span class="t" style="left:170.40px;top:102.89px;font-size:11px;color:#141414;transform:scaleX(1.0119);">255.255.255.0</span>
<span class="t" style="left:77.90px;top:126.69px;font-size:11px;color:#55626d;transform:scaleX(1.0095);-webkit-text-stroke:.36px currentColor;">Default Gateway</span>
<div class="abs" style="left:165px;top:123px;width:231px;height:20px;border:1px solid #abaeb1;border-radius:3px;background:#fff"></div>
<span class="t" style="left:170.40px;top:126.89px;font-size:11px;color:#141414;transform:scaleX(0.9853);">169.0.0.1</span>
<span class="t" style="left:27.40px;top:150.69px;font-size:11px;color:#55626d;-webkit-text-stroke:.36px currentColor;">IPv6 Address/Prefix Length</span>
<div class="abs" style="left:165px;top:147px;width:231px;height:20px;border:1px solid #abaeb1;border-radius:3px;background:#fff"></div>
<span class="t" style="left:53.40px;top:174.69px;font-size:11px;color:#55626d;-webkit-text-stroke:.36px currentColor;">Default IPv6 Gateway</span>
<div class="abs" style="left:165px;top:171px;width:231px;height:20px;border:1px solid #abaeb1;border-radius:3px;background:#fff"></div>
<span class="t" style="left:130.30px;top:198.69px;font-size:11px;color:#55626d;transform:scaleX(0.9336);-webkit-text-stroke:.36px currentColor;">Speed</span>
<div class="abs" style="left:165px;top:195px;width:231px;height:20px;border:1px solid #abaeb1;border-radius:3px;background:#fff"></div>
<span class="t" style="left:170.40px;top:198.89px;font-size:11px;color:#141414;transform:scaleX(1.0093);">auto-negotiate</span>
<svg class="abs" style="left:378.3px;top:202.3px" width="11" height="7" viewBox="0 0 11 7" fill="none"><path d="M.8 .9 L5.5 5.6 L10.2 .9" stroke="#3c3c3c" stroke-width="1"/></svg>
<div class="abs" style="left:375px;top:196px;width:1px;height:18px;background:#f4f4f4"></div>
<span class="t" style="left:135.90px;top:223.69px;font-size:11px;color:#55626d;transform:scaleX(1.0114);-webkit-text-stroke:.36px currentColor;">MTU</span>
<div class="abs" style="left:165px;top:220px;width:231px;height:20px;border:1px solid #abaeb1;border-radius:3px;background:#fff"></div>
<span class="t" style="left:170.40px;top:223.89px;font-size:11px;color:#141414;transform:scaleX(1.0129);">1500</span>
<div class="fs" style="top:253.5px;height:64.5px"></div>
<div class="abs" style="left:19px;top:251.5px;width:194.5px;height:5px;background:#fff"></div>
<span class="t" style="left:24.30px;top:247.09px;font-size:11px;color:#485a68;font-weight:bold;transform:scaleX(0.9409);">Administrative Management Services</span>
<div class="cb on" style="left:33px;top:271px"><svg width="14" height="14" viewBox="0 0 14 14" fill="none" style="position:absolute;left:-1px;top:-1px"><path d="M3 7.6 L5.7 10.3 L11.2 3.6" stroke="#fff" stroke-width="1.1"/></svg></div>
<span class="t" style="left:51.40px;top:272.09px;font-size:11px;color:#242a31;transform:scaleX(0.9640);">HTTP</span>
<div class="cb on" style="left:218px;top:271px"><svg width="14" height="14" viewBox="0 0 14 14" fill="none" style="position:absolute;left:-1px;top:-1px"><path d="M3 7.6 L5.7 10.3 L11.2 3.6" stroke="#fff" stroke-width="1.1"/></svg></div>
<span class="t" style="left:236.40px;top:272.09px;font-size:11px;color:#242a31;transform:scaleX(0.9234);">HTTPS</span>
<div class="cb" style="left:33px;top:293px"></div>
<span class="t" style="left:51.40px;top:294.09px;font-size:11px;color:#242a31;transform:scaleX(0.9878);">Telnet</span>
<div class="cb on" style="left:218px;top:293px"><svg width="14" height="14" viewBox="0 0 14 14" fill="none" style="position:absolute;left:-1px;top:-1px"><path d="M3 7.6 L5.7 10.3 L11.2 3.6" stroke="#fff" stroke-width="1.1"/></svg></div>
<span class="t" style="left:236.40px;top:294.09px;font-size:11px;color:#242a31;transform:scaleX(0.8751);">SSH</span>
<div class="fs" style="top:329px;height:86px"></div>
<div class="abs" style="left:19px;top:327px;width:97.8px;height:5px;background:#fff"></div>
<span class="t" style="left:24.30px;top:322.59px;font-size:11px;color:#485a68;font-weight:bold;transform:scaleX(0.9464);">Network Services</span>
<div class="cb" style="left:33px;top:347px"></div>
<span class="t" style="left:51.40px;top:348.09px;font-size:11px;color:#242a31;transform:scaleX(0.9384);">HTTP OCSP</span>
<div class="cb on" style="left:218px;top:347px"><svg width="14" height="14" viewBox="0 0 14 14" fill="none" style="position:absolute;left:-1px;top:-1px"><path d="M3 7.6 L5.7 10.3 L11.2 3.6" stroke="#fff" stroke-width="1.1"/></svg></div>
<span class="t" style="left:236.40px;top:348.09px;font-size:11px;color:#242a31;transform:scaleX(0.9260);">Ping</span>
<div class="cb" style="left:33px;top:368px"></div>
<span class="t" style="left:51.40px;top:369.09px;font-size:11px;color:#242a31;transform:scaleX(0.9597);">SNMP</span>
<div class="cb" style="left:218px;top:368px"></div>
<span class="t" style="left:236.40px;top:369.09px;font-size:11px;color:#242a31;transform:scaleX(0.9712);">User-ID</span>
<div class="cb" style="left:33px;top:390px"></div>
<span class="t" style="left:51.40px;top:391.09px;font-size:11px;color:#242a31;transform:scaleX(0.9487);">User-ID Syslog Listener-SSL</span>
<div class="cb" style="left:218px;top:390px"></div>
<span class="t" style="left:236.40px;top:391.09px;font-size:11px;color:#242a31;transform:scaleX(0.9724);">User-ID Syslog Listener-UDP</span>
<div class="abs" style="left:399px;top:47px;width:385px;height:370px;border:1px solid #c0c2c4;background:#fff"></div>
<div class="abs" style="left:400px;top:48px;width:383px;height:24px;background:#eaecec;border-bottom:1px solid #c0c2c4"></div>
<div class="abs" style="left:427px;top:48px;width:1px;height:23px;background:#c0c2c4"></div>
<div class="abs" style="left:604px;top:48px;width:1px;height:23px;background:#c0c2c4"></div>
<div class="abs" style="left:781px;top:48px;width:1px;height:23px;background:#8f9193"></div>
<div class="abs" style="left:406px;top:51px;width:13px;height:13.5px;border:1.5px solid #2779b0;border-radius:2.5px;background:#fdfdfd"></div>
<span class="t" style="left:432.60px;top:54.73px;font-size:10px;color:#2c3036;font-weight:bold;letter-spacing:0.6px;transform:scaleX(0.9295);">PERMITTED IP ADDRESSES</span>
<span class="t" style="left:609.50px;top:54.73px;font-size:10px;color:#2c3036;font-weight:bold;letter-spacing:0.6px;transform:scaleX(0.9482);">DESCRIPTION</span>
<div class="abs" style="left:400px;top:389px;width:383px;height:27px;background:#f4f6f6;border-top:1px solid #c0c2c4"></div>
<div class="abs" style="left:406.7px;top:397.2px;width:14.4px;height:13.8px;border:1.5px solid #56697c;border-radius:3.5px;background:#fff"></div>
<div class="abs" style="left:409.3px;top:402.8px;width:9.8px;height:2.4px;background:#8ca02e"></div>
<div class="abs" style="left:413px;top:399.4px;width:2.4px;height:9.3px;background:#8ca02e"></div>
<span class="t" style="left:423.80px;top:398.97px;font-size:11.5px;color:#1a1a1a;transform:scaleX(1.0064);">Add</span>
<div class="abs" style="left:459.2px;top:397.2px;width:14.4px;height:13.8px;border:1.3px solid #bcc8d2;border-radius:3.5px;background:#fff"></div>
<div class="abs" style="left:463.1px;top:402.8px;width:6.8px;height:2.3px;background:#d09c90"></div>
<span class="t" style="left:476.80px;top:398.97px;font-size:11.5px;color:#a3a3a3;transform:scaleX(1.0226);">Delete</span>
<div class="abs" style="left:771px;top:11px;width:15px;height:15px;border-radius:8px;background:#f1f5fa;border:1px dashed #9bb4de"></div>
<div class="abs" style="left:772.8px;top:12.8px;width:11.4px;height:11.4px;border-radius:6px;background:radial-gradient(circle at 40% 30%,#2e86c2,#0a5a94 70%)"></div>
<span class="t" style="left:775.80px;top:13.86px;font-size:9.5px;color:#fff;font-weight:bold;transform:scaleX(0.9290);-webkit-text-stroke:0;">?</span>
<div class="abs" style="left:634px;top:447px;width:75px;height:28px;border-radius:14px;background:#0e96e2"></div>
<span class="t" style="left:662.60px;top:454.44px;font-size:12px;color:#fff;transform:scaleX(0.9917);">OK</span>
<div class="abs" style="left:715px;top:447px;width:75px;height:28px;border-radius:14px;background:#fff;border:1px solid #b4b6b8"></div>
<span class="t" style="left:736.20px;top:454.89px;font-size:11px;color:#1c1c1c;transform:scaleX(0.9635);">Cancel</span>
</div>
</div>
</body>
</html>
